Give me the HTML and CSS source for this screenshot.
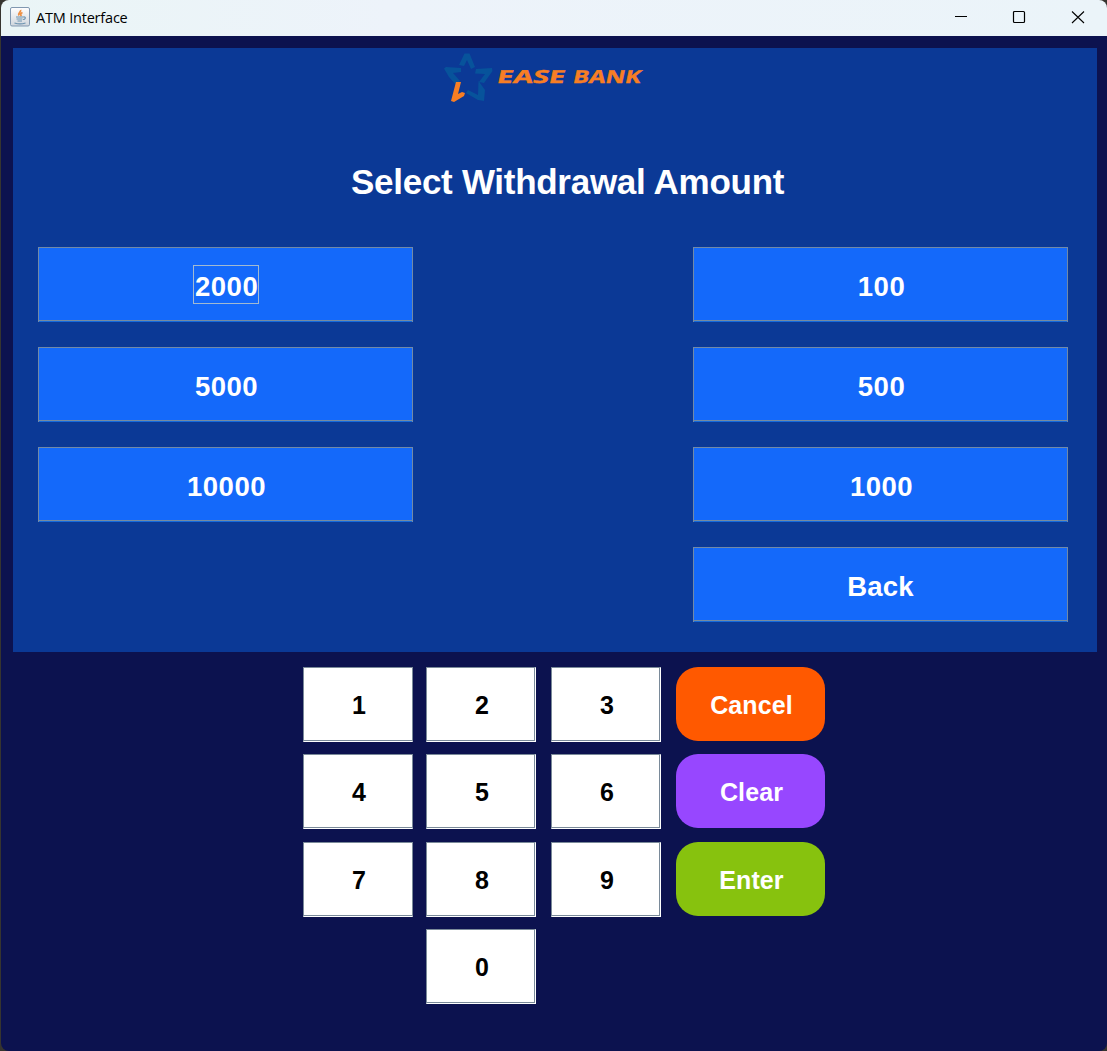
FILE: index.html
```html
<!DOCTYPE html>
<html lang="en">
<head>
<meta charset="utf-8">
<title>ATM Interface</title>
<link rel="stylesheet" href="styles.css">
</head>
<body>
<div class="window">
  <header class="titlebar">
    <svg class="app-icon" width="20" height="20" viewBox="0 0 20 20">
      <defs><linearGradient id="g" x2="0" y2="1"><stop stop-color="#fff"/><stop offset="1" stop-color="#cfd5dc"/></linearGradient></defs>
      <rect x=".5" y=".5" width="19" height="18.5" rx="1.5" fill="url(#g)" stroke="#8198b0"/>
      <path d="M10.5 3c1 2-3 3-1.500 5.500M12.500 5.500c-2 1-2.500 2-1 3.500" fill="none" stroke="#ee8f43" stroke-width="1.800"/>
      <path d="M6 10h8M6.500 12h6M7.500 14h4.500M4.500 16c3 1 8 1 11 0M13.500 10c3-.5 2 2.500-.5 2.500" fill="none" stroke="#6c93b0" stroke-width="1.200"/>
    </svg>
    <span class="window-title">ATM Interface</span>
    <svg class="controls" width="132" height="14" viewBox="0 0 132 14">
      <path d="M0 6.500h12" stroke="#000"/>
      <rect x="58.500" y="1.500" width="11" height="11" rx="1" fill="none" stroke="#000" stroke-width="1.200"/>
      <path d="M117 1.500l12 11.500M129 1.500L117 13" stroke="#000" stroke-width="1.100"/>
    </svg>
  </header>
  <main class="body">
    <section class="screen">
      <svg class="logo" width="202" height="52" viewBox="0 0 202 52">
        <path class="star" d="M16 13L21.500 1.500h5L32 15l-4 2-4-9-3 6zM1 16.500l2-1.500 15 1v4l-8 1 7 8-4 4-7-8zM33 17l16-1 .5 3-8.500 12-5-1 6-8-10-.5zM35.500 29l6.500 9-1 11-6-1-12-7 2-3 10 5z"/>
        <path class="flame" d="M13 30h5l-3 12 4-2 3 1-1 3-10 6-3-1z"/>
        <g class="brand"><text transform="translate(53 31) skewX(-12)" textLength="68" lengthAdjust="spacingAndGlyphs">EASE</text>
        <text transform="translate(129 31) skewX(-12)" textLength="68" lengthAdjust="spacingAndGlyphs">BANK</text></g>
      </svg>
      <h1 class="heading">Select Withdrawal Amount</h1>
      <div class="amounts">
        <div class="column">
          <button class="amount"><span class="focused">2000</span></button>
          <button class="amount">5000</button>
          <button class="amount">10000</button>
        </div>
        <div class="column">
          <button class="amount">100</button>
          <button class="amount">500</button>
          <button class="amount">1000</button>
          <button class="amount back">Back</button>
        </div>
      </div>
    </section>
    <section class="keypad">
      <button class="key first">1</button><button class="key">2</button><button class="key">3</button><button class="action cancel">Cancel</button>
      <button class="key first">4</button><button class="key">5</button><button class="key">6</button><button class="action clear">Clear</button>
      <button class="key first">7</button><button class="key">8</button><button class="key">9</button><button class="action enter">Enter</button>
      <button class="key zero">0</button>
    </section>
  </main>
</div>
</body>
</html>
```
FILE: styles.css
```css
* { box-sizing: border-box; }
body { margin: 0; background: #36342f; font-family: "Liberation Sans", Arial, sans-serif; }
button { padding: 0; border: 0; font-family: inherit; font-weight: bold; }
.window { height: 1051px; padding-left: 1px; overflow: hidden; }
.titlebar { height: 36px; display: flex; align-items: center; padding: 0 20px 0 9px; background: linear-gradient(90deg, #eaf5f6, #edf3fa 35%, #ebf4f9); border-radius: 8px 8px 0 0; }
.app-icon { margin-top: -3px; }
.window-title { margin: -2px auto 0 6px; font: 14.500px "Open Sans", sans-serif; letter-spacing: -.2px; color: #000; }
.controls { margin-top: -3px; }
.body { height: 1015px; padding: 12px 10px 0 12px; background: #0c124f; border-radius: 0 0 8px 8px; }
.screen { height: 604px; padding: 4px 29px 0 25px; background: #0b3996; display: flex; flex-direction: column; }
.logo { margin-left: 405px; flex: none; }
.star { fill: #07539b; }
.flame { fill: #f77e24; }
.brand { fill: #f77e24; stroke: #f77e24; stroke-width: .4px; font: bold 18px "Open Sans", sans-serif; }
.heading { margin: 58px 0 0 313px; font-size: 35px; line-height: 40px; letter-spacing: -.28px; white-space: nowrap; color: #fff; }
.amounts { display: flex; justify-content: space-between; margin-top: 45px; }
.column { display: flex; flex-direction: column; gap: 25px; }
.amount { width: 375px; height: 75px; padding: 3px 0 0 2px; font-size: 27.500px; letter-spacing: .5px; color: #fff; background: #1469fa; border: 1px solid #718aa8; border-bottom: 0; box-shadow: inset 0 -1px #1469dc, inset 0 -2px #758ba0; }
.back { padding-left: 0; letter-spacing: .2px; }
.focused { display: inline-block; width: 66px; height: 39px; line-height: 41px; margin: -4px 0 0 -1px; padding-left: 1px; border: 1px solid #a2bad1; }
.keypad { display: grid; grid-template-columns: 123px 125px 125px 149px; row-gap: 12.400px; grid-auto-rows: 75px; margin: 15px 0 0 290px; }
.key { width: 110px; padding: 2px 0 0 2px; font-size: 25px; color: #000; background: #fff; border: 1px solid #7a8a99; border-bottom-color: #fff; border-right-color: #fff; box-shadow: inset -1px -1px #7a8a99; }
.first { border-right-color: #7a8a99; box-shadow: inset 0 -1px #7a8a99; }
.zero { grid-column: 2; }
.action { height: 74px; padding: 3px 0 0 2px; border-radius: 22px; font-size: 25px; letter-spacing: .1px; color: #fff; }
.cancel { background: #ff5900; }
.clear { background: #9747ff; }
.enter { background: #87c20e; }
```
